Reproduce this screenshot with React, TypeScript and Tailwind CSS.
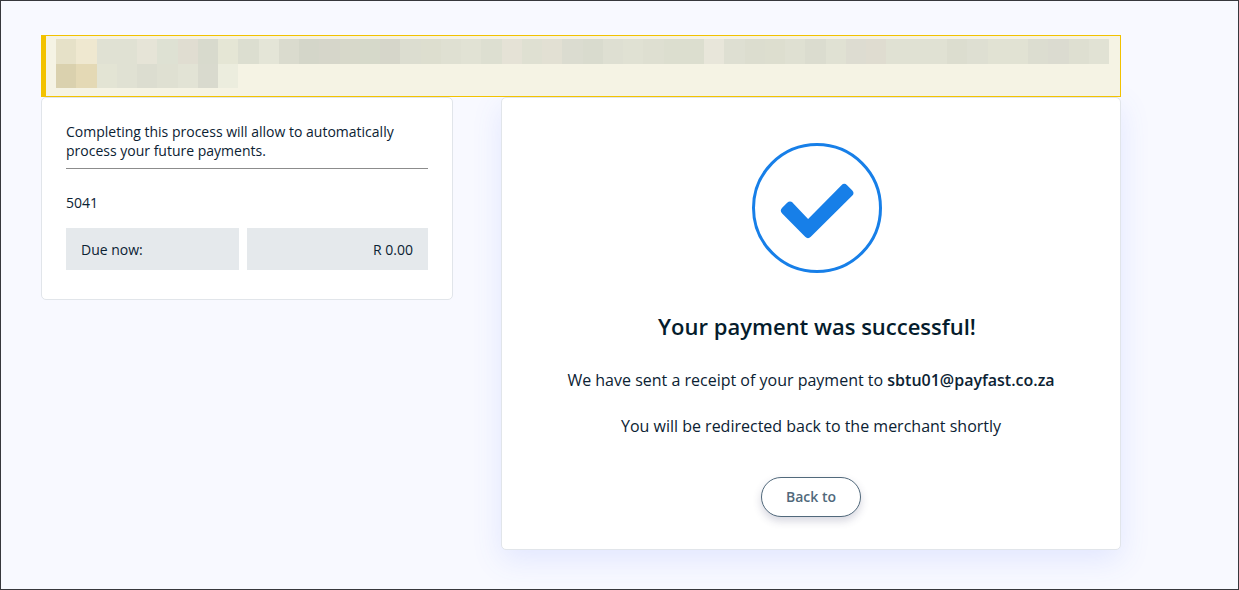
const upperRow: string[] = [
  "#e6e1c8", "#efe8d0", "#e0e1d3", "#e0e1d3", "#e6e4d7", "#dee1d3", "#e0ddd1", "#d8dacd", "#e5e6d5", "#dcded0",
  "#e4e5d7", "#dadbce", "#d4d6c9", "#d6d6ca", "#d7d8ca", "#d6d9ca", "#d6d6ca", "#dcddd0", "#dddecf", "#dfe0d2",
  "#e1e2d4", "#dddfd1", "#e5e2d6", "#dfe0d2", "#e2e0d3", "#dbdcd0", "#d9dbce", "#dedfd2", "#e0e1d3", "#dedfd1",
  "#dcdecf", "#dcdecf", "#e8e6da", "#dedfd2", "#dcddcf", "#dddecf", "#dfe0d2", "#dbdccf", "#e0e1d3", "#dddcd1",
  "#dfdcd0", "#e0e1d3", "#e0e1d3", "#e0e1d3", "#dcddcf", "#dedfd2", "#e1e2d3", "#e1e2d3", "#dcddd0", "#dbdbd0",
  "#dedfd1", "#e1e2d4",
];

const lowerRow: string[] = [
  "#dad1ae", "#e4d9b5", "#e3e4d4", "#e0e1d3", "#dcddd0", "#dfe0d2", "#e2e3d5", "#d9dace", "#ecedde",
];

function Mosaic() {
  return (
    <div aria-hidden="true" className="grid grid-cols-[repeat(52,minmax(0,1fr))]">
      {upperRow.map((color, i) => (
        <span key={`u${i}`} className="h-[25px]" style={{ backgroundColor: color }} />
      ))}
      {lowerRow.map((color, i) => (
        <span key={`l${i}`} className="h-6" style={{ backgroundColor: color }} />
      ))}
    </div>
  );
}

function Summary() {
  return (
    <section className="rounded-[5px] border border-[#e1e5ea] bg-white p-6 pb-[29px] text-sm text-[#0b2233]">
      <p className="border-b border-[#8c8c8c] pb-2 leading-[19px]">
        Completing this process will allow to automatically process your future payments.
      </p>
      <p className="mt-6 leading-5">5041</p>
      <dl className="mt-[15px] grid grid-cols-[173fr_181fr] gap-2 leading-5">
        <dt className="bg-[#e5e9ec] px-[15px] pt-3 pb-2.5">Due now:</dt>
        <dd className="bg-[#e5e9ec] px-[15px] pt-3 pb-2.5 text-right">R 0.00</dd>
      </dl>
    </section>
  );
}

function SuccessMark() {
  return (
    <svg viewBox="0 0 130 130" className="ml-3 size-[130px]" aria-hidden="true">
      <circle cx="65" cy="65" r="63.5" fill="none" stroke="#177fe8" strokeWidth="3" />
      <path
        d="M33 67.7 L38 62.7 L56 81.7 L92.3 45 L97.3 50 L56 91 Z"
        fill="#177fe8"
        stroke="#177fe8"
        strokeWidth="8"
        strokeLinejoin="round"
      />
    </svg>
  );
}

function Confirmation() {
  return (
    <section className="flex flex-col items-center rounded-[5px] border border-[#e1e5ea] bg-white px-6 pt-[45px] pb-8 text-center text-[#0b2233] shadow-[0_10px_30px_rgba(80,110,255,0.13)]">
      <SuccessMark />
      <h1 className="mt-[38px] ml-3 text-[22px] leading-[30px] font-semibold text-[#051c2c]">
        Your payment was successful!
      </h1>
      <p className="mt-[27px] leading-6">
        We have sent a receipt of your payment to <b className="font-semibold">sbtu01@payfast.co.za</b>
      </p>
      <p className="mt-[22px] leading-6">You will be redirected back to the merchant shortly</p>
      <button
        type="button"
        className="mt-[39px] h-10 rounded-full border border-[#51697b] bg-white px-6 text-sm font-semibold text-[#51697b] shadow-[0_4px_8px_rgba(50,50,93,0.2)]"
      >
        Back to
      </button>
    </section>
  );
}

export default function App() {
  return (
    <main className="min-h-screen border border-[#37383d] bg-[#f8f9ff] px-10 pt-[34px] pb-9 font-['Open_Sans','Noto_Sans',sans-serif]">
      <div className="max-w-[1080px]">
        <div className="relative border border-l-[5px] border-[#f2c200] bg-[#f5f3e4] pt-[3px] pr-[11px] pb-2 pl-[10px]">
          <Mosaic />
        </div>
        <div className="grid grid-cols-[412fr_620fr] items-start gap-12">
          <Summary />
          <Confirmation />
        </div>
      </div>
    </main>
  );
}
